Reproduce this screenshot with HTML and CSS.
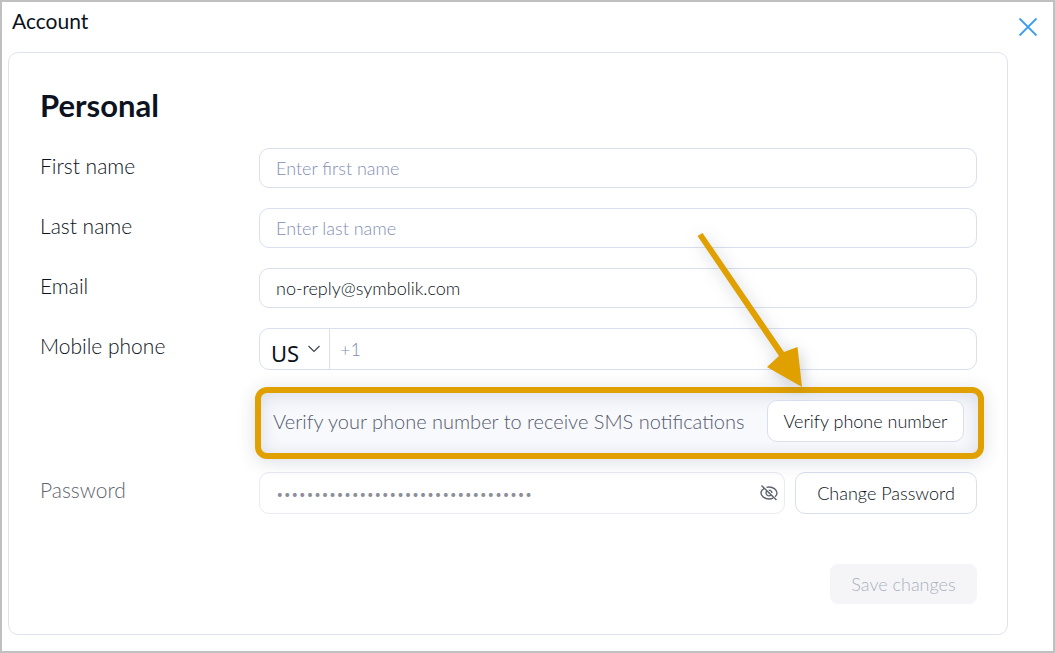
FILE: index.html
```html
<!DOCTYPE html>
<html lang="en">
<head>
<meta charset="utf-8">
<title>Account</title>
<link rel="stylesheet" href="styles.css">
</head>
<body>
<div class="dialog">
  <header class="dialog-header">
    <h1 class="dialog-title">Account</h1>
    <button class="close" type="button" aria-label="Close">
      <svg width="20" height="20" viewBox="0 0 20 20" fill="none" stroke="#3d9df5" stroke-width="1.8"><path d="M1.5 1.5l17 17M18.500 1.500l-17 17"/></svg>
    </button>
  </header>
  <form class="card">
    <h2 class="card-title">Personal</h2>
    <div class="row">
      <label class="label" for="first">First name</label>
      <input class="field" id="first" type="text" placeholder="Enter first name">
    </div>
    <div class="row">
      <label class="label" for="last">Last name</label>
      <input class="field" id="last" type="text" placeholder="Enter last name">
    </div>
    <div class="row">
      <label class="label" for="email">Email</label>
      <input class="field" id="email" type="email" value="no-reply@symbolik.com">
    </div>
    <div class="row">
      <label class="label" for="phone">Mobile phone</label>
      <div class="field phone">
        <div class="country">
          <select class="country-select" aria-label="Country"><option>US</option></select>
          <svg class="chevron" width="12" height="8" viewBox="0 0 12 8" fill="none" stroke="#3a3f4b" stroke-width="1.1"><path d="M.5 1l5.500 5.500L11.500 1"/></svg>
        </div>
        <input class="phone-input" id="phone" type="tel" placeholder="+1">
      </div>
    </div>
    <div class="callout">
      <p class="callout-text">Verify your phone number to receive SMS notifications</p>
      <button class="button verify" type="button">Verify phone number</button>
      <svg class="arrow" width="110" height="158" viewBox="0 0 110 158" fill="#dfa000">
        <path d="M3.500 6L8.500 3L90 122L103.500 117L108 157L73 137L85 126Z"/>
      </svg>
    </div>
    <div class="row">
      <label class="label muted" for="password">Password</label>
      <div class="field password">
        <input class="password-input" id="password" type="password" value="abcdefghijklmnopqrstuvwxyz01234567">
        <button class="eye" type="button" aria-label="Show password">
          <svg width="18" height="18" viewBox="0 0 18 18" fill="none" stroke="#5f636e" stroke-width="1.400"><path d="M1.500 1.500l15 14.500M4.200 4.300C2.400 5.400 1 7.300 1 9c0 3 3.600 6 8 6 1.500 0 2.900-.3 4.100-.9M6.500 3.400C7.300 3.100 8.100 3 9 3c4.400 0 8 3 8 6 0 1.400-.7 2.700-1.900 3.800M6.600 7.200C5.300 9 6.600 11.900 9 11.900c.8 0 1.500-.3 2-.8M8.800 6.100c1.700 0 3 1.200 3.100 2.900M8.500 8.600l1.300 1.200"/></svg>
        </button>
      </div>
      <button class="button" type="button">Change Password</button>
    </div>
    <div class="actions">
      <button class="save" type="submit" disabled>Save changes</button>
    </div>
  </form>
</div>
</body>
</html>
```
FILE: styles.css
```css
* { box-sizing: border-box; }
body {
  margin: 0;
  background: #fff;
  color: #0c1220;
  font-family: Lato, "Liberation Sans", sans-serif;
  font-weight: 300;
}
button, input, select { font: inherit; color: inherit; margin: 0; }
.dialog {
  min-height: 100vh;
  border: 2px solid #c0c0c0;
  padding: 0 6px 16px;
}
.dialog-header {
  display: flex;
  justify-content: space-between;
  height: 50px;
  padding: 7px 9px 0 4px;
}
.dialog-title {
  margin: 0;
  font-size: 21px;
  line-height: 24px;
  font-weight: 400;
}
.close {
  display: flex;
  align-self: flex-start;
  margin-top: 8px;
  padding: 0;
  border: 0;
  background: none;
}
.card {
  margin-right: 39px;
  padding: 34px 30px 30px 31px;
  border: 1px solid #dfe3f0;
  border-radius: 10px;
}
.card-title {
  margin: 0 0 25px;
  font-size: 31px;
  line-height: 36px;
  font-weight: 700;
}
.row {
  display: flex;
  margin-bottom: 20px;
}
.label {
  width: 219px;
  flex: none;
  font-size: 21px;
  line-height: 36px;
}
.muted { color: #62656f; }
.field {
  flex: 1;
  min-width: 0;
  height: 40px;
  padding: 0 16px;
  border: 1px solid #d9dfee;
  border-radius: 10px;
  background: #fff;
  font-size: 18px;
}
::placeholder { color: #838eb2; opacity: 1; }
.phone {
  display: flex;
  height: 42px;
  padding: 0;
}
.country {
  display: flex;
  align-items: center;
  gap: 8px;
  padding: 0 9px 0 11px;
  border-right: 1px solid #d9dfee;
}
.country-select {
  appearance: none;
  height: 40px;
  padding: 8px 0 0;
  border: 0;
  background: none;
  font: 400 22px/28px "Noto Sans", sans-serif;
}
.phone-input, .password-input {
  flex: 1;
  min-width: 0;
  padding: 0 10px;
  border: 0;
  background: none;
}
.callout {
  position: relative;
  display: flex;
  align-items: center;
  justify-content: space-between;
  margin: -3px -7px 13px 215px;
  padding: 7px 14px 11px 12px;
  border: 6px solid #dfa000;
  border-radius: 12px;
  background: #f7f9fd;
  box-shadow: 0 3px 18px rgba(40, 50, 80, .16), inset 0 3px 18px rgba(40, 50, 80, .14);
}
.callout-text {
  margin: 0;
  font-size: 20px;
  line-height: 24px;
  white-space: nowrap;
  color: #555a6b;
}
.arrow {
  position: absolute;
  top: -163px;
  right: 174px;
  overflow: visible;
  filter: drop-shadow(2px 4px 8px rgba(40, 50, 80, .25));
}
.button {
  height: 42px;
  flex: none;
  width: 182px;
  padding: 0;
  border: 1px solid #d9dfee;
  border-radius: 10px;
  background: #fff;
  font-size: 18px;
}
.verify { width: 197px; }
.password {
  display: flex;
  align-items: center;
  height: 42px;
  margin-right: 10px;
  padding: 0 6px 0 16px;
  border-color: #e8ebf4;
}
.password-input { padding: 2px 0 0; color: #8b8e98; font-size: 13px; }
.eye {
  display: flex;
  padding: 0;
  border: 0;
  background: none;
}
.actions {
  display: flex;
  justify-content: flex-end;
  padding-top: 30px;
}
.save {
  width: 147px;
  height: 40px;
  padding: 0;
  border: 0;
  border-radius: 8px;
  background: #f5f5f8;
  color: #aab0c0;
  font-size: 18px;
}
```
